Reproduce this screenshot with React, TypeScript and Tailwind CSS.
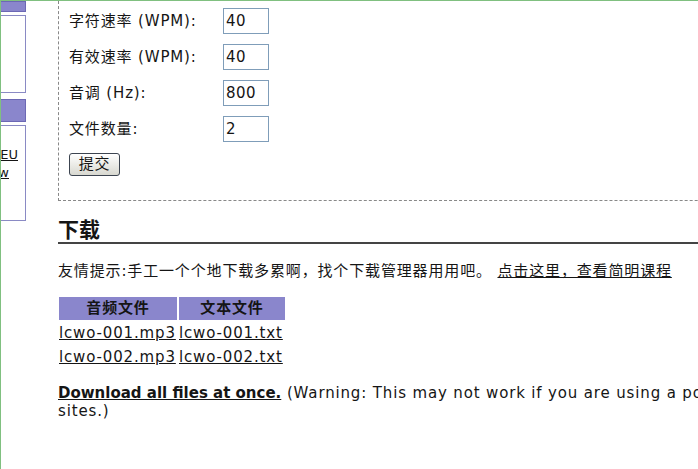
import React from 'react';

const FONT = { fontFamily: '"DejaVu Sans", "Noto Sans CJK SC", sans-serif' };

const rows = [
  { label: '字符速率 (WPM):', value: '40' },
  { label: '有效速率 (WPM):', value: '40' },
  { label: '音调 (Hz):', value: '800' },
  { label: '文件数量:', value: '2' },
];

const files = [
  { mp3: 'lcwo-001.mp3', txt: 'lcwo-001.txt' },
  { mp3: 'lcwo-002.mp3', txt: 'lcwo-002.txt' },
];

export default function App() {
  return (
    <div
      style={FONT}
      className="w-[698px] h-[469px] overflow-hidden bg-white border-t border-l border-[#80c080] text-[15px] tracking-[0.85px] text-[#151515] flex"
    >
      {/* Sidebar (scrolled off to the left) */}
      <div className="w-[25px] shrink-0 overflow-hidden text-[13px] tracking-normal">
        <div className="w-[145px] -ml-[120px] flex flex-col">
          <div className="h-[11px] bg-[#8a86cc] border border-[#6c68b4]" />
          <div className="h-[78px] mt-[3px] border border-[#8a8ac4]" />
          <div className="h-[23px] mt-[6px] bg-[#8a86cc] border border-[#6c68b4]" />
          <div className="h-[96px] mt-[3px] border border-[#8a8ac4] pt-[20px] text-right leading-[18px]">
            <div className="underline pr-[7px]">Berichte EU</div>
            <div className="underline pr-[16px]">Overview</div>
          </div>
        </div>
      </div>

      {/* Main column */}
      <div className="ml-[32px] w-[760px] shrink-0">
        <div className="h-[200px] border-l border-b border-dashed border-[#888] pl-[10px] pt-[7px]">
          {rows.map((r) => (
            <div key={r.label} className="flex items-center h-[26px] mb-[10px]">
              <span className="w-[154px] shrink-0 whitespace-nowrap">{r.label}</span>
              <input
                readOnly
                value={r.value}
                style={FONT}
                className="w-[46px] h-[26px] border border-[#7f9db9] px-[2px] text-[15px] tracking-[0.5px] text-[#151515] outline-none"
              />
            </div>
          ))}
          <button
            style={FONT}
            className="mt-[1px] w-[51px] h-[23px] rounded-[3px] border border-[#3c4450] bg-gradient-to-b from-white to-[#d8d8d0] text-[15px] leading-none text-[#151515]"
          >
            提交
          </button>
        </div>

        <h2 className="mt-[17px] text-[21px] font-bold leading-[24px] border-b-2 border-[#444] tracking-normal">下载</h2>

        <p className="mt-[18px] leading-[18px] whitespace-nowrap">
          友情提示:手工一个个地下载多累啊，找个下载管理器用用吧。{' '}
          <span className="underline">点击这里，查看简明课程</span>
        </p>

        <table className="mt-[15px] border-separate border-spacing-[2px] -ml-[1px]">
          <thead>
            <tr>
              <th className="w-[118px] h-[21px] p-0 bg-[#8a86cc] font-bold text-center">音频文件</th>
              <th className="w-[106px] h-[21px] p-0 bg-[#8a86cc] font-bold text-center">文本文件</th>
            </tr>
          </thead>
          <tbody>
            {files.map((f) => (
              <tr key={f.mp3}>
                <td className="h-[22px] p-0 underline whitespace-nowrap">{f.mp3}</td>
                <td className="h-[22px] p-0 underline whitespace-nowrap">{f.txt}</td>
              </tr>
            ))}
          </tbody>
        </table>

        <p className="mt-[13px] leading-[18px] w-[1100px]">
          <span className="font-bold underline tracking-normal">Download all files at once.</span> (Warning: This may not work if you are using a pop-up blocker or other security software on some
          <br />
          sites.)
        </p>
      </div>
    </div>
  );
}
